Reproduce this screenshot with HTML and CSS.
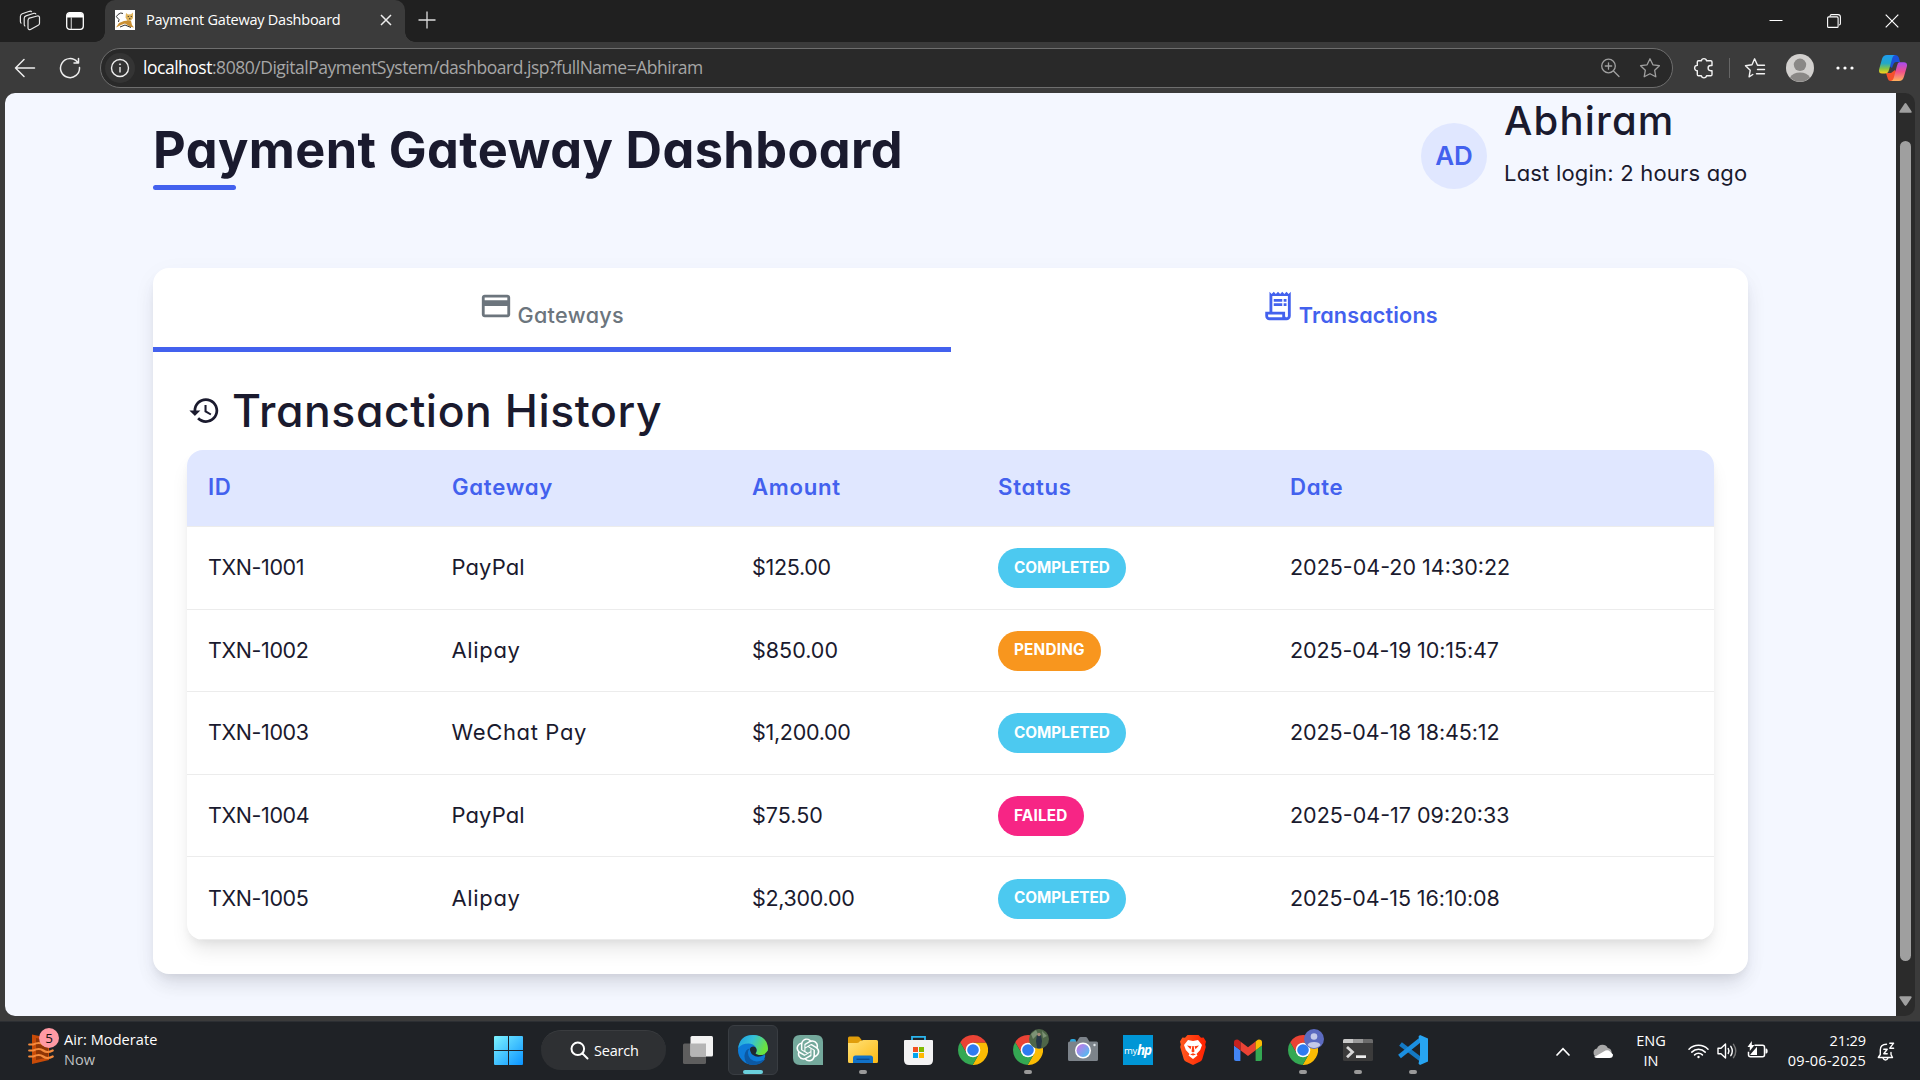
FILE: index.html
```html
<!DOCTYPE html>
<html lang="en">
<head>
<meta charset="utf-8">
<title>Payment Gateway Dashboard</title>
<link rel="stylesheet" href="styles.css">
</head>
<body>
<svg class="defs" width="0" height="0">
  <defs>
    <linearGradient id="winBlue" x1="0" y1="0" x2="1" y2="1"><stop offset="0" stop-color="#7df3ff"/><stop offset="1" stop-color="#0a93ff"/></linearGradient>
    <linearGradient id="edgeTop" x1="0" y1="0" x2="1" y2=".35"><stop offset="0" stop-color="#1b9de2"/><stop offset=".5" stop-color="#35c1d8"/><stop offset="1" stop-color="#6be33d"/></linearGradient>
    <linearGradient id="folder" x1="0" y1="0" x2="1" y2="1"><stop offset="0" stop-color="#ffe27a"/><stop offset="1" stop-color="#fdb913"/></linearGradient>
    <linearGradient id="lens" x1="0" y1="0" x2="1" y2="1"><stop offset="0" stop-color="#cf6fe8"/><stop offset="1" stop-color="#3fc6f0"/></linearGradient>
    <linearGradient id="brave" x1="0" y1="0" x2="1" y2="0"><stop offset="0" stop-color="#ff5a1f"/><stop offset="1" stop-color="#ff2000"/></linearGradient>
    <linearGradient id="copA" x1="0" y1="0" x2="0" y2="1"><stop offset="0" stop-color="#1f9cf0"/><stop offset=".45" stop-color="#23a8c8"/><stop offset=".75" stop-color="#8bc53f"/><stop offset="1" stop-color="#ffd21c"/></linearGradient>
    <linearGradient id="copB" x1="0" y1="0" x2="0" y2="1"><stop offset="0" stop-color="#a74bf0"/><stop offset=".5" stop-color="#f0508c"/><stop offset="1" stop-color="#ffb35c"/></linearGradient>
    <symbol id="chrome" viewBox="-15 -15 30 30">
      <path fill="#ea4335" d="M-12.8-7.8A15 15 0 0 1 13.16-7.2H0L-6.235 3.6z"/>
      <path fill="#fbbc04" d="M13.16-7.2A15 15 0 0 1-.345 15L6.235 3.6 0-7.2z"/>
      <path fill="#34a853" d="M-.345 15A15 15 0 0 1-12.8-7.8L-6.235 3.6H6.235z"/>
      <circle r="7.3" fill="#fff"/><circle r="5.8" fill="#2f7bf0"/>
    </symbol>
  </defs>
</svg>

<div class="tabstrip">
  <svg class="ws" width="22" height="22" viewBox="0 0 22 22" fill="none" stroke="#e6e6e6" stroke-width="1.2" stroke-linejoin="round"><path d="M9.5 8.3 18.2 6q2.3-.5 2.3 1.600V13.200q0 1.500-1.300 2.100L11.500 19.500Q9.500 20.300 9 18.200V10.500Q9 8.800 10.500 8.100M6.300 16.200Q5.200 16 5.200 14.300V8.300Q5.300 6.300 7 5.800L15 3.300q1.700-.2 2 1M2.400 13.400Q1.400 13 1.400 11.500V6.500Q1.500 4.500 3.200 3.800L10.500 1.300q1.800-.4 2.200.8"/></svg>
  <svg class="vt" width="18" height="18" viewBox="0 0 18 18"><rect x=".7" y=".7" width="16.600" height="16.600" rx="3" fill="none" stroke="#fff" stroke-width="1.300"/><path fill="#fff" d="M1 5.600V3.500Q1 1 3.500 1h11Q17 1 17 3.500v2.100z"/><path stroke="#bbb" stroke-width="1.200" d="M5.300 5v12"/></svg>
  <div class="tab">
    <svg width="20" height="20" viewBox="0 0 20 20"><path fill="#fff" d="M0 0h20v20H0z"/><path fill="#e0b45c" d="M11 3l2 1.500 3-.3L18 2.500 18 8l-2 2.500-3.500.5L10.500 7.500z"/><path fill="#c98f33" d="M1 17.500l3-4.500 5-2 4-.5 3 .5 1 4 2 2.500-4-.8-5-3.200-4 1.500z"/><path fill="none" stroke="#333" stroke-width="1" d="M3.500 12Q5 9 2.500 8T3 4.500t5-1M5 17l5-2 6 2.500M12.800 6.500h1M15.800 6.500h1M14 8.800h1.500"/></svg>
    <span class="tab-title">Payment Gateway Dashboard</span>
    <svg class="tab-x" width="12" height="12" viewBox="0 0 12 12" stroke="#eee" stroke-width="1.500"><path d="M1 1l10 10M11 1 1 11"/></svg>
  </div>
  <svg class="plus" width="18" height="18" viewBox="0 0 18 18" stroke="#ddd" stroke-width="1.300"><path d="M9 .5v17M.5 9h17"/></svg>
  <div class="win">
    <svg width="14" height="14" viewBox="0 0 14 14" stroke="#fff"><path d="M.5 6.500h13"/></svg>
    <svg width="14" height="14" viewBox="0 0 14 14" fill="none" stroke="#fff" stroke-width="1.100"><rect x=".6" y="2.900" width="10.500" height="10.500" rx="1"/><path d="M3 2.500V2Q3.200.6 4.500.6H11Q13.400.6 13.400 3V9.500q0 1.300-1.400 1.500"/></svg>
    <svg width="14" height="14" viewBox="0 0 14 14" stroke="#fff" stroke-width="1.200"><path d="M.7.7l12.600 12.600M13.300.7.7 13.300"/></svg>
  </div>
</div>

<div class="toolbar">
  <svg class="back" width="22" height="20" viewBox="0 0 22 20" fill="none" stroke="#eee" stroke-width="1.500" stroke-linecap="round" stroke-linejoin="round"><path d="M20.500 10H1.500M10 1.500 1.500 10l8.500 8.500"/></svg>
  <svg class="reload" width="22" height="22" viewBox="0 0 22 22" fill="none" stroke="#eee" stroke-width="1.500" stroke-linecap="round" stroke-linejoin="round"><path d="M20.500 10.500A9.500 9.500 0 1 1 18.300 5M19.500 1.500V6H15"/></svg>
  <div class="omnibox">
    <span class="info"><svg width="20" height="20" viewBox="0 0 20 20" fill="none" stroke="#eee" stroke-width="1.400"><circle cx="10" cy="10" r="8.500"/><path d="M10 9v5.500"/><circle cx="10" cy="6.300" r=".6" fill="#eee" stroke-width=".8"/></svg></span>
    <span class="url"><b>localhost</b>:8080/DigitalPaymentSystem/dashboard.jsp?fullName=Abhiram</span>
    <svg class="mag" width="20" height="20" viewBox="0 0 20 20" fill="none" stroke="#a0a0a0" stroke-width="1.300" stroke-linecap="round"><circle cx="8.500" cy="8" r="6.800"/><path d="M13.500 13l5.500 5.500M8.500 4.800v6.400M5.300 8h6.400"/></svg>
    <svg width="22" height="22" viewBox="0 0 22 22" fill="none" stroke="#a0a0a0" stroke-width="1.300" stroke-linejoin="round"><path d="M11 1.800l2.900 6 6.500.9-4.700 4.600 1.100 6.500L11 16.700l-5.800 3.100 1.100-6.500L1.600 8.700l6.500-.9z"/></svg>
  </div>
  <svg class="puzzle" width="22" height="22" viewBox="0 0 22 22" fill="none" stroke="#f2f2f2" stroke-width="1.400" stroke-linejoin="round"><path d="M8.300 3.800a2.700 2.700 0 0 1 5.300 0h4.200q1.200 0 1.200 1.200v3.500h-1.300a2.600 2.600 0 0 0 0 5.200H19V17.500q0 1.200-1.200 1.200h-4.200a2.700 2.700 0 0 1-5.300 0H5.500q-1.200 0-1.200-1.200v-3.700a2.700 2.700 0 0 1 0-5.400V5q0-1.200 1.200-1.200z"/></svg>
  <i class="sep"></i>
  <svg class="favs" width="22" height="22" viewBox="0 0 22 22" fill="none" stroke="#f2f2f2" stroke-width="1.400" stroke-linejoin="round" stroke-linecap="round"><path d="M20.500 8.300h-7L10.600 1.800 8 7.800l-6.500.9 4.700 4.600-1.100 6.500L8.800 17.500M13.500 12.500h7M12.500 16.700h8"/></svg>
  <svg class="me" width="28" height="28" viewBox="0 0 28 28"><circle cx="14" cy="14" r="14" fill="#d2d0ce"/><circle cx="14" cy="10.800" r="6.200" fill="#8a8886"/><path fill="#8a8886" d="M4 23.500Q7 18.500 14 18.500t10 5A14 14 0 0 1 4 23.500z"/></svg>
  <svg class="dots" width="18" height="4" viewBox="0 0 18 4" fill="#fff"><circle cx="2" cy="2" r="1.600"/><circle cx="9" cy="2" r="1.600"/><circle cx="16" cy="2" r="1.600"/></svg>
  <svg class="copilot" width="28" height="26" viewBox="0 0 28 26"><path fill="#1b50d8" d="M11 0h5.500q2.500 0 3.300 2.500L21 7h-4q-2 0-3 3l-1 3-4-3z"/><path fill="#f4512c" d="M7 18h5l4-3 2 4-2 5q-.6 2-2 2h-2.500q-2 0-2.700-2.300z"/><path fill="url(#copA)" d="M8 0h8q-2 .3-2.700 3l-3.300 12q-.9 3.500-4 3.500H3Q-.8 18.500.2 14L3 4Q4.200 0 8 0z"/><path fill="url(#copB)" d="M20 7.300h5q3.800 0 2.800 4.500L25 21.500Q23.800 26 20 26h-8q2-.3 2.700-3L18 10.800q.8-3.500 2-3.500z"/></svg>
</div>

<div class="viewport">
  <main class="page">
    <header class="header">
      <h1>Payment Gateway Dashboard</h1>
      <div class="user">
        <div class="avatar">AD</div>
        <div class="who"><div class="name">Abhiram</div><div class="login">Last login: 2 hours ago</div></div>
      </div>
    </header>
    <section class="card">
      <nav class="tabs">
        <a class="t marked"><svg width="34" height="34" viewBox="0 0 24 24" fill="currentColor"><path d="M20 4H4c-1.110 0-1.990.89-1.990 2L2 18c0 1.110.89 2 2 2h16c1.110 0 2-.89 2-2V6c0-1.110-.89-2-2-2zm0 14H4v-6h16v6zm0-10H4V6h16v2z"/></svg><span>Gateways</span></a>
        <a class="t on"><svg width="34" height="34" viewBox="0 0 24 24" fill="currentColor"><path d="M19.500 3.500 18 2l-1.500 1.500L15 2l-1.500 1.500L12 2l-1.500 1.500L9 2 7.500 3.500 6 2v14H3v3c0 1.660 1.340 3 3 3h12c1.660 0 3-1.340 3-3V2l-1.500 1.500zM15 20H6c-.55 0-1-.45-1-1v-1h10v2zm4-1c0 .55-.45 1-1 1s-1-.45-1-1v-3H8V5h11v14z"/><path d="M9 7h6v2H9zM16 7h2v2h-2zM9 10h6v2H9zM16 10h2v2h-2z"/></svg><span>Transactions</span></a>
      </nav>
      <div class="panel">
        <h2><svg width="33" height="33" viewBox="0 0 24 24" fill="currentColor"><path d="M13 3c-4.970 0-9 4.030-9 9H1l3.890 3.890.07.14L9 12H6c0-3.870 3.130-7 7-7s7 3.130 7 7-3.130 7-7 7c-1.930 0-3.680-.79-4.940-2.060l-1.420 1.420C8.270 19.990 10.510 21 13 21c4.970 0 9-4.030 9-9s-4.030-9-9-9zm-1 5v5l4.280 2.540.72-1.210-3.500-2.080V8H12z"/></svg><span>Transaction History</span></h2>
        <table>
          <colgroup><col class="c1"><col class="c2"><col class="c3"><col class="c4"><col></colgroup>
          <thead><tr><th>ID</th><th>Gateway</th><th>Amount</th><th>Status</th><th>Date</th></tr></thead>
          <tbody>
            <tr><td class="id">TXN-1001</td><td class="gw pp">PayPal</td><td class="amt">$125.00</td><td><span class="badge ok">COMPLETED</span></td><td>2025-04-20 14:30:22</td></tr>
            <tr><td class="id">TXN-1002</td><td class="gw">Alipay</td><td>$850.00</td><td><span class="badge wait">PENDING</span></td><td class="date">2025-04-19 10:15:47</td></tr>
            <tr><td class="id">TXN-1003</td><td class="gw">WeChat Pay</td><td class="amt">$1,200.00</td><td><span class="badge ok">COMPLETED</span></td><td class="date">2025-04-18 18:45:12</td></tr>
            <tr><td class="id">TXN-1004</td><td class="gw pp">PayPal</td><td>$75.50</td><td><span class="badge bad">FAILED</span></td><td>2025-04-17 09:20:33</td></tr>
            <tr><td class="id">TXN-1005</td><td class="gw">Alipay</td><td class="amt">$2,300.00</td><td><span class="badge ok">COMPLETED</span></td><td class="date">2025-04-15 16:10:08</td></tr>
          </tbody>
        </table>
      </div>
    </section>
  </main>
  <div class="scroll">
    <svg width="13" height="10" viewBox="0 0 13 10"><path fill="#9f9f9f" d="M5.300.9q1.200-1.600 2.400 0l4.800 7.300q.6 1.600-1 1.600h-10q-1.600 0-1-1.600z"/></svg>
    <i class="thumb"></i>
    <svg width="13" height="10" viewBox="0 0 13 10"><path fill="#9f9f9f" d="M5.300 9.100q1.200 1.600 2.400 0l4.800-7.300q.6-1.600-1-1.600h-10q-1.600 0-1 1.600z"/></svg>
  </div>
</div>

<div class="taskbar">
  <div class="weather">
    <div class="wicon"><svg width="26" height="32" viewBox="0 0 26 32"><path fill="#c84b08" d="M4 1.500 21 5v22L4 31z"/><path fill="#8f3506" d="M8 5l12 2.500v17L8 27z"/><g fill="none" stroke="#f58a3c" stroke-width="2.200" stroke-linecap="round"><path d="M1.200 11.500h4q6-3 10 0t9.500 0M1.200 17.500h4q6-3 10 0t9.500 0M1.200 23.500h4q6-3 10 0t9.500 0"/></g></svg><span class="count">5</span></div>
    <div class="wtext"><span>Air: Moderate</span><span class="dim">Now</span></div>
  </div>
  <div class="apps">
    <div class="app"><svg width="29" height="29" viewBox="0 0 29 29" fill="url(#winBlue)"><path d="M1 0h13v14H0V1q0-1 1-1zM15 0h13q1 0 1 1v13H15zM0 15h14v14H1q-1 0-1-1zM15 15h14v13q0 1-1 1H15z"/></svg></div>
    <div class="search"><svg width="19" height="19" viewBox="0 0 19 19" fill="none" stroke="#fff" stroke-width="2" stroke-linecap="round"><circle cx="7.800" cy="7.800" r="6.300"/><path d="M12.500 12.500l5 5"/></svg><span>Search</span></div>
    <div class="app"><svg width="30" height="28" viewBox="0 0 30 28"><rect y="7.500" width="23" height="20.500" rx="1.500" fill="#5e5e5e"/><rect x="7.500" width="22.500" height="20.500" rx="1.500" fill="#f2f2f2"/><path fill="#b5b5b5" d="M7.500 7.500H23v13H9q-1.500 0-1.500-1.500z"/></svg></div>
    <div class="app active"><svg width="30" height="30" viewBox="0 0 30 30"><circle cx="15" cy="15" r="15" fill="#0d7bd8"/><path fill="url(#edgeTop)" d="M.2 13Q2 0 15 0q14 .5 15 13.500 0 6.500-7 6.500-5 0-5.500-1.800 1.500-1.500 1-4-.8-4.200-6-5.500Q4.500 8 .2 13z"/><path fill="#0c59a4" d="M11.500 13.500Q8 18.500 12.500 24q5 4.500 13.500.5l1.500-1Q23 30 15 30 6 30 6.500 20.500 7.500 14 11.500 13.500z"/><path fill="#202830" d="M17.500 18.200q1.500-1.500 1-4-.7-2.700-3.500-2.700-2.600.3-3.200 2.600.5 5.400 5.500 7.200 5 1.200 9.500-1.900-1.800.6-3.800.6-5 0-5.500-1.800z"/><path fill="#2c3035" d="M26.500 19.300 30 15.500V22l-2.800 2-1-.300Q28 21 26.500 19.300z"/></svg><i class="run"></i></div>
    <div class="app"><svg width="30" height="30" viewBox="0 0 30 30"><path fill="#74a99c" d="M7 0h16q7 0 7 7v23H7q-7 0-7-7V7q0-7 7-7z"/><path transform="translate(3.400 3.400) scale(.96)" fill="#fff" d="M22.282 9.821a5.985 5.985 0 0 0-.516-4.911 6.046 6.046 0 0 0-6.510-2.900A6.065 6.065 0 0 0 4.981 4.182a5.985 5.985 0 0 0-3.998 2.900 6.046 6.046 0 0 0 .743 7.097 5.980 5.980 0 0 0 .511 4.911 6.051 6.051 0 0 0 6.515 2.900A5.985 5.985 0 0 0 13.260 24a6.056 6.056 0 0 0 5.772-4.206 5.989 5.989 0 0 0 3.998-2.900 6.056 6.056 0 0 0-.748-7.073zm-9.022 12.608a4.476 4.476 0 0 1-2.876-1.041l.142-.08 4.778-2.758a.795.795 0 0 0 .393-.681v-6.737l2.020 1.169a.071.071 0 0 1 .038.052v5.583a4.504 4.504 0 0 1-4.495 4.494zm-9.661-4.125a4.471 4.471 0 0 1-.535-3.014l.142.085 4.783 2.758a.771.771 0 0 0 .781 0l5.843-3.369v2.332a.080.080 0 0 1-.033.062L9.740 19.950a4.499 4.499 0 0 1-6.141-1.646zM2.341 7.896a4.485 4.485 0 0 1 2.366-1.973V11.600a.766.766 0 0 0 .388.677l5.814 3.354-2.020 1.169a.076.076 0 0 1-.071 0l-4.830-2.787A4.504 4.504 0 0 1 2.341 7.872zm16.596 3.856L13.104 8.364 15.119 7.200a.076.076 0 0 1 .071 0l4.830 2.791a4.494 4.494 0 0 1-.677 8.104v-5.677a.790.790 0 0 0-.407-.667zm2.011-3.023l-.142-.085-4.774-2.782a.776.776 0 0 0-.785 0L9.409 9.230V6.897a.066.066 0 0 1 .028-.062l4.830-2.787a4.499 4.499 0 0 1 6.680 4.660zM8.307 12.863l-2.020-1.164a.080.080 0 0 1-.038-.057V6.074a4.499 4.499 0 0 1 7.376-3.454l-.142.081L8.704 5.459a.795.795 0 0 0-.393.681zm1.098-2.365l2.602-1.500 2.607 1.500v2.999l-2.597 1.500-2.607-1.500z"/></svg></div>
    <div class="app"><svg width="30" height="28" viewBox="0 0 30 28"><path fill="#e09d0a" d="M1.500.5h8.200q1.300 0 2 1L14 4.500V12H0V2Q0 .5 1.500.5z"/><path fill="url(#folder)" d="M12 5h1.500q.8-1 2-1H28.500Q30 4 30 5.500v20q0 1.500-1.500 1.500h-27Q0 27 0 25.500V7q3 0 9 0 2 0 3-2z"/><path fill="#1272c8" d="M7.500 19.500h15q2.500 0 2.500 2.500v5H5v-5q0-2.500 2.500-2.500z"/><path stroke="#0b4c91" stroke-width="1.400" d="M8.500 23.300h13"/></svg><i class="run idle"></i></div>
    <div class="app"><svg width="29" height="30" viewBox="0 0 29 30"><path fill="none" stroke="#2bb6ee" stroke-width="1.800" d="M8 7V1.900h13V7"/><path fill="#f3f3f3" d="M1 5h27q1 0 1 1v19q0 5-5 5H5q-5 0-5-5V6q0-1 1-1z"/><path fill="#f25022" d="M9 12h5v5H9z"/><path fill="#7fba00" d="M15 12h5v5h-5z"/><path fill="#00a4ef" d="M9 18h5v5H9z"/><path fill="#ffb900" d="M15 18h5v5h-5z"/></svg></div>
    <div class="app"><svg width="30" height="30"><use href="#chrome"/></svg></div>
    <div class="app"><svg width="30" height="30"><use href="#chrome"/></svg><svg class="pb" width="20" height="20" viewBox="0 0 20 20"><circle cx="10" cy="10" r="10" fill="#4e6648"/><path fill="#7c9275" d="M2 5l5-4 2 4-5 5zM13 2l5 5-4 2z"/><path fill="#263746" d="M8 6h4l1 6-1 7H8l-1-7z"/><circle cx="10" cy="5.500" r="1.700" fill="#a78b77"/></svg><i class="run idle"></i></div>
    <div class="app"><svg width="30" height="26" viewBox="0 0 30 26"><path fill="#2aa7de" d="M2 4q0-2 2-2h2q2 0 2 2v3H2z"/><path fill="#7c838a" d="M1.500 4.500H9L11 1q.6-1 1.700-1h5q1 0 1.600 1l2 3.500h7.200Q30 4.500 30 6v16.500q0 1.500-1.500 1.500h-27Q0 24 0 22.500V6q0-1.500 1.500-1.500z"/><circle cx="15" cy="13.500" r="8" fill="#fff"/><circle cx="15" cy="13.500" r="6.500" fill="url(#lens)"/><circle cx="26.500" cy="8" r="1.200" fill="#dfe6ea"/></svg></div>
    <div class="app"><span class="hp"><span class="my">my</span><span class="h">hp</span></span></div>
    <div class="app"><svg width="26" height="30" viewBox="0 0 26 30"><path fill="url(#brave)" d="M7.500 0h11l2.500 2.800 2.600-.3L26 6.500l-.8 3 .6 2.500-3.500 12q-.5 1.700-2 2.600L13 30l-7.300-3.400q-1.500-.9-2-2.600L.2 12l.6-2.500-.8-3 2.400-4 2.600.3z"/><path fill="#fff" d="M8 5l5 .9L18 5l4 5-1.800 5-3.700 4 1 1.500L13 24l-4.500-3.500 1-1.500-3.700-4L4 10z"/><path fill="#ff3b10" d="M7 10.500l4.500.8-1 3zM19 10.500l-4.500.8 1 3zM12.300 11h1.400l.8 5.500L13 17.500l-1.500-1zM10 19.500l3-1.300 3 1.300-3 1z"/></svg></div>
    <div class="app"><svg class="gm" width="28" height="22" viewBox="0 0 28 22"><path fill="#4285f4" d="M0 6.500l6.400 4.700V22H2q-2 0-2-2z"/><path fill="#34a853" d="M28 6.500l-6.400 4.700V22H26q2 0 2-2z"/><path fill="#ea4335" d="M6.400 2.500 14 8.300l7.600-5.800v8.700L14 17l-7.600-5.800z"/><path fill="#c5221f" d="M0 3.300Q0 .5 3 .5q1.300 0 2.200.9l1.200 1.100v8.700L0 6.500z"/><path fill="#fbbc04" d="M28 3.300Q28 .5 25 .5q-1.300 0-2.200.9l-1.200 1.100v8.700L28 6.500z"/></svg></div>
    <div class="app"><svg width="30" height="30"><use href="#chrome"/></svg><svg class="pb" width="20" height="20" viewBox="0 0 20 20"><circle cx="10" cy="10" r="10" fill="#5c6bc0"/><circle cx="10" cy="7.500" r="3.300" fill="#c5cae9"/><path fill="#c5cae9" d="M3.500 16q1-3 6.500-3t6.500 3Q14 19 10 19t-6.500-3z"/></svg><i class="run idle"></i></div>
    <div class="app"><svg width="30" height="22" viewBox="0 0 30 22"><rect width="30" height="22" rx="1.500" fill="#3b3b3b"/><path fill="#c9c9c9" d="M1.500 0H10v4H0V1.500Q0 0 1.500 0z"/><path fill="#9a9a9a" d="M10 0h10v4H10z"/><path fill="#6b6b6b" d="M20 0h8.500Q30 0 30 1.500V4H20z"/><path fill="none" stroke="#d8d8d8" stroke-width="2.800" d="M4 8l5.500 5L4 18.300"/><path fill="#eee" d="M13 16.300h10V19H13z"/></svg><i class="run idle"></i></div>
    <div class="app"><svg width="30" height="30" viewBox="0 0 30 30"><path fill="none" stroke="#1479c4" stroke-width="4.500" stroke-linejoin="round" d="M23 24.500 2.500 9"/><path fill="none" stroke="#1b8fe0" stroke-width="4.500" d="M1.500 21.500 24 3.500"/><path fill="#27a5f2" d="M22 0l8 3.500v23L22 30l-1.500-1.500L22 22V8l-1.500-6.500z"/></svg><i class="run idle"></i></div>
  </div>
  <div class="tray">
    <svg class="chev" width="14" height="9" viewBox="0 0 14 9" fill="none" stroke="#fff" stroke-width="1.700" stroke-linecap="round"><path d="M1 8l6-6.300L13 8"/></svg>
    <svg class="cloud" width="20" height="14" viewBox="0 0 20 14"><path fill="#a8a8a8" d="M4.500 13A4.300 4.300 0 0 1 4 4.500 6 6 0 0 1 14.800 4 4.800 4.800 0 0 1 16 13z"/><path fill="#fff" d="M3 12l9.500-5.500Q15 5.500 17 7.500t3 3q0 3.500-3.500 3.500H4q-1.500 0-3-1.200z"/></svg>
    <div class="lang"><span>ENG</span><span>IN</span></div>
    <svg class="wifi" width="21" height="16" viewBox="0 0 21 16" fill="none" stroke="#fff" stroke-width="1.500" stroke-linecap="round"><path d="M1 6.300a13.400 13.400 0 0 1 19 0M3.800 9.100a9.500 9.500 0 0 1 13.400 0M6.600 11.900a5.500 5.500 0 0 1 7.800 0"/><circle cx="10.500" cy="14" r="1.200" fill="#fff" stroke="none"/></svg>
    <svg class="vol" width="21" height="18" viewBox="0 0 21 18" fill="none" stroke="#fff" stroke-width="1.400" stroke-linecap="round" stroke-linejoin="round"><path d="M1 6.300h3L8.500 2v14L4 11.700H1zM11.200 6.500q1.600 2.500 0 5M13.800 4.300q3 4.700 0 9.400"/><path stroke="#777" d="M16.500 2.300q4.500 6.700 0 13.400"/></svg>
    <svg class="bat" width="21" height="18" viewBox="0 0 21 18"><path fill="none" stroke="#fff" stroke-width="1.500" d="M7.500 4.300h8q2 0 2 2v7.400q0 2-2 2H3.500q-2 0-2-2v-3"/><path fill="#fff" d="M18.500 7.500h1q1.200.5 1.200 2.500t-1.200 2.500h-1zM3.300 13.500 10 5.800V14H4q-.7 0-.7-.5zM4.800 0v4h2.700L2.800 10V6H.5z"/></svg>
    <div class="clock"><span>21:29</span><span class="day">09-06-2025</span></div>
    <svg class="bell" width="18" height="19" viewBox="0 0 18 19" fill="none" stroke="#fff" stroke-width="1.400" stroke-linejoin="round" stroke-linecap="round"><path d="M9.500 2.200Q3.300 2.200 3.300 8v4.500L1.300 15.500H15.500L14 12.500v-2M6 16q.8 2 2.500 2t2.500-2M6.800 7.300h3.400l-3.400 4.400h3.400M12.800 1.200h3.800l-3.800 5h3.800"/></svg>
  </div>
</div>
</body>
</html>
```
FILE: styles.css
```css
* { box-sizing: border-box; }
body { margin: 0; width: 1920px; height: 1080px; overflow: hidden; display: flex; flex-direction: column; background: #3b3b3b; font-family: "Open Sans", "Noto Sans", sans-serif; }
svg { display: block; flex: none; }
.defs { position: absolute; }

/* browser tab strip */
.tabstrip { height: 42px; background: #202020; display: flex; align-items: center; flex: none; }
.ws { margin-left: 19px; }
.vt { margin-left: 25px; }
.tab { position: relative; margin-left: 21px; width: 300px; height: 42px; padding: 0 13px 2px 10px; background: #3b3b3b; border-radius: 10px 10px 0 0; display: flex; align-items: center; }
.tab::before, .tab::after { content: ""; position: absolute; bottom: 0; width: 10px; height: 10px; }
.tab::before { left: -10px; background: radial-gradient(circle at 0 0, #202020 9.5px, #3b3b3b 10px); }
.tab::after { right: -10px; background: radial-gradient(circle at 100% 0, #202020 9.5px, #3b3b3b 10px); }
.tab-title { margin: -1px 0 0 11px; font-size: 14.5px; letter-spacing: -.24px; color: #fff; white-space: nowrap; }
.tab-x { margin-left: auto; }
.plus { margin-left: 13px; margin-top: -3px; }
.win { margin-left: auto; margin-right: 21px; display: flex; gap: 44px; }

/* address bar */
.toolbar { height: 51px; flex: none; display: flex; align-items: center; }
.back { margin-left: 14px; }
.reload { margin-left: 23px; }
.omnibox { margin-left: 19px; width: 1573px; height: 40px; border: 1px solid #6e6e6e; border-radius: 20px; background: #292929; display: flex; align-items: center; padding: 0 11px 0 4px; }
.info { width: 30px; height: 30px; border-radius: 50%; background: #343434; display: flex; align-items: center; justify-content: center; }
.url { margin: -2px 0 0 8px; font-size: 17.5px; letter-spacing: -.48px; color: #a6a6a6; white-space: nowrap; }
.url b { font-weight: 400; color: #fff; }
.mag { margin-left: auto; margin-right: 19px; }
.puzzle { margin-left: 20px; }
.sep { width: 1px; height: 20px; background: #666; margin-left: 14px; }
.favs { margin-left: 14px; }
.me { margin-left: 20px; }
.dots { margin-left: 22px; }
.copilot { margin-left: 25px; }

/* page area */
.viewport { margin-left: 5px; margin-right: 5px; height: 923px; flex: none; display: flex; border-radius: 10px; overflow: hidden; background: #2b2b2b; }
.page { width: 1891px; padding: 0 148px; background: #f4f7ff; color: #1a1a2e; font-family: Inter, sans-serif; font-feature-settings: "cv11"; }
.header { height: 175px; display: flex; justify-content: space-between; align-items: flex-start; }
h1 { position: relative; margin: 27px 0 0; font-size: 50.5px; line-height: 60px; font-weight: 700; letter-spacing: .4px; white-space: nowrap; }
h1::after { content: ""; position: absolute; left: 0; top: 65px; width: 83px; height: 5px; border-radius: 3px; background: #4361ee; }
.user { display: flex; }
.avatar { margin-top: 30px; width: 66px; height: 66px; padding-bottom: 2px; border-radius: 50%; background: #e0e7ff; color: #4361ee; font-size: 26px; font-weight: 600; display: flex; align-items: center; justify-content: center; }
.who { width: 244px; margin-left: 17px; padding-top: 5px; white-space: nowrap; }
.name { font-size: 40px; line-height: 46px; font-weight: 500; letter-spacing: 1.2px; }
.login { margin-top: 16px; font-size: 22px; line-height: 26px; letter-spacing: .2px; }

.card { height: 706px; border-radius: 16px; background: #fff; box-shadow: 0 13px 20px -4px rgba(0,0,0,.1), 0 5px 8px -2px rgba(0,0,0,.05), 0 6px 26px rgba(20,30,90,.04); }
.tabs { display: flex; height: 84px; }
.t { flex: 1; display: flex; justify-content: center; align-items: flex-start; gap: 4px; padding-top: 21px; color: #6c757d; font-size: 21.6px; line-height: 26px; font-weight: 500; letter-spacing: .35px; }
.t span { margin-top: 13px; }
.t.on { color: #4361ee; font-weight: 600; letter-spacing: .15px; }
.marked { border-bottom: 5px solid #4361ee; }
.panel { padding: 31px 34px 35px; }
h2 { margin: 0 0 11px; display: flex; align-items: center; font-size: 44.5px; line-height: 56px; font-weight: 500; letter-spacing: .55px; }
h2 svg { margin: -2px 0 0 1px; }
h2 span { margin-left: 11px; }

table { width: 1527px; table-layout: fixed; border-collapse: separate; border-spacing: 0; border-radius: 16px; overflow: hidden; background: #fff; box-shadow: 0 13px 20px -4px rgba(0,0,0,.1), 0 5px 8px -2px rgba(0,0,0,.05); }
.c1 { width: 244px; } .c2 { width: 300px; } .c3 { width: 246px; } .c4 { width: 292px; }
th, td { padding: 0 0 0 21px; text-align: left; vertical-align: middle; border-bottom: 1px solid #ececec; white-space: nowrap; }
th { height: 77px; background: #e0e7ff; color: #4361ee; font-size: 22.2px; font-weight: 600; letter-spacing: .7px; padding-bottom: 3px; }
td { height: 82.6px; font-size: 21.5px; padding-bottom: 1px; }
td.id { letter-spacing: -.4px; }
td.gw { font-size: 22px; letter-spacing: .65px; padding-left: 20.500px; }
td.pp { letter-spacing: .1px; }
td.amt { letter-spacing: -.3px; }
td.date { letter-spacing: -.1px; }
.badge { display: inline-flex; height: 40px; align-items: center; padding: 0 16px 2px; border-radius: 20px; color: #fff; font-size: 15.300px; font-weight: 700; letter-spacing: 0; vertical-align: middle; position: relative; top: 1px; }
.ok { background: #4cc9f0; }
.wait { background: #f8961e; letter-spacing: .2px; }
.bad { background: #f72585; letter-spacing: .2px; }

.scroll { width: 19px; display: flex; flex-direction: column; align-items: center; padding: 10px 0; }
.thumb { width: 11px; height: 821px; margin: 28px 0 35px; border-radius: 6px; background: #9f9f9f; }

/* taskbar */
.taskbar { margin-top: 5px; height: 59px; flex: none; display: flex; background: #1f2226; color: #fff; font-size: 14.5px; border-top: 1px solid #2c2f33; }
.weather { width: 483px; padding-left: 28px; display: flex; align-items: flex-start; }
.wicon { position: relative; margin-top: 11px; }
.count { position: absolute; left: 11px; top: -5px; width: 20px; height: 20px; border-radius: 50%; background: #ff99a4; color: #111; font-size: 13.5px; line-height: 20px; text-align: center; }
.wtext { display: flex; flex-direction: column; margin-left: 10px; margin-top: 8px; line-height: 20px; letter-spacing: .08px; }
.dim { color: #bfc1c3; }
.apps { display: flex; height: 50px; margin-top: 3px; gap: 5px; align-items: center; }
.app { position: relative; width: 50px; height: 50px; display: flex; align-items: center; justify-content: center; }
.active { background: #2c3035; border: 1px solid #393d42; border-radius: 6px; }
.run { position: absolute; left: 50%; bottom: 1px; width: 20px; height: 4px; margin-left: -10px; border-radius: 2px; background: #6bd0dc; }
.active .run { bottom: 0; }
.idle { width: 8px; margin-left: -4px; background: #9a9a9a; }
.pb { position: absolute; right: 4px; top: 4px; }
.search { width: 125px; height: 40px; margin: 0 2px 0 3px; border-radius: 20px; background: #2e3033; border-top: 1px solid #3a3c3f; display: flex; align-items: center; padding-left: 29px; gap: 5px; }
.search span { letter-spacing: -.2px; }
.hp { width: 30px; height: 30px; background: #0096d6; color: #fff; display: flex; align-items: center; justify-content: center; font-style: italic; }
.my { font-size: 9.500px; font-style: normal; letter-spacing: -.3px; }
.h { font-size: 13.500px; font-weight: 700; letter-spacing: -1px; margin-right: 1px; }
.tray { margin-left: auto; display: flex; align-items: center; height: 58px; }
.cloud { margin-left: 23px; }
.lang, .clock { display: flex; flex-direction: column; line-height: 20px; margin-top: -1px; }
.lang { width: 34px; margin-left: 21px; text-align: center; }
.wifi { margin-left: 20px; }
.vol { margin-left: 8px; }
.bat { margin-left: 9px; margin-top: -3px; }
.clock { width: 90px; margin-left: 8px; text-align: right; letter-spacing: -.1px; }
.day { letter-spacing: .25px; }
.bell { margin-left: 11px; margin-right: 25px; }
```
